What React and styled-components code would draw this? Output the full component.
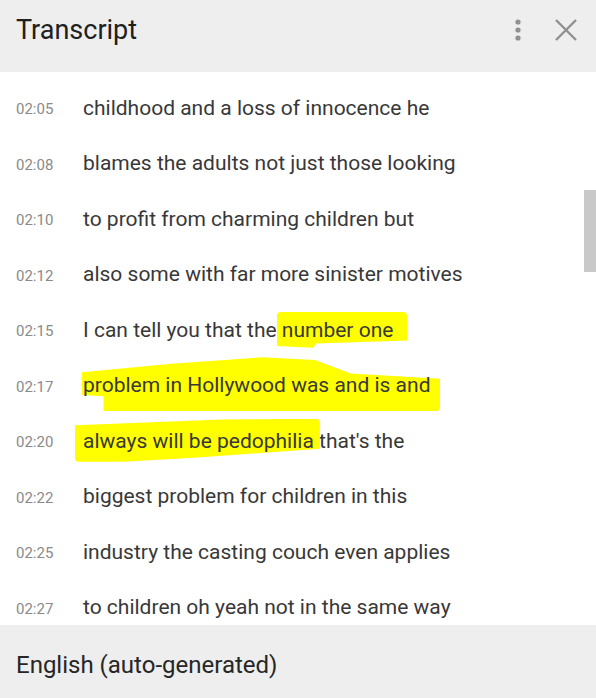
import React from "react";
import styled, { createGlobalStyle } from "styled-components";

const Global = createGlobalStyle`
  html, body { margin: 0; padding: 0; background: #fff; }
  body { font-family: Roboto, "Noto Sans", sans-serif; }
  * { box-sizing: border-box; }
`;

const Panel = styled.div`
  width: 596px;
  height: 698px;
  display: flex;
  flex-direction: column;
  background: #fff;
  overflow: hidden;
`;

const Header = styled.header`
  height: 72px;
  flex: none;
  background: #eeeeee;
  display: flex;
  align-items: center;
  padding: 0 0 12px 16px;
`;

const Title = styled.h1`
  margin: 0;
  flex: 1;
  font-size: 27px;
  font-weight: 400;
  color: #202020;
`;

const IconButton = styled.button`
  border: 0;
  background: none;
  padding: 0;
  width: ${(p) => p.$w}px;
  height: 40px;
  display: flex;
  align-items: center;
  justify-content: center;
  color: #909090;
`;

const List = styled.div`
  position: relative;
  flex: 1;
  overflow: hidden;
  padding-top: 8px;
`;

const Row = styled.div`
  height: 55.5px;
  display: flex;
  align-items: center;
  padding-left: 16px;
`;

const Time = styled.span`
  width: 67px;
  flex: none;
  font-size: 15px;
  color: #8a8a8a;
  padding-top: 3px;
`;

const Text = styled.span`
  font-size: 21px;
  color: #383838;
  white-space: nowrap;
`;

const Mark = styled.span`
  position: relative;
  z-index: 0;
  &::before {
    content: "";
    position: absolute;
    z-index: -1;
    top: ${(p) => p.$t}px;
    bottom: ${(p) => p.$b}px;
    left: ${(p) => p.$l}px;
    right: ${(p) => p.$r}px;
    background: #ffff00;
    border-radius: 4px;
    clip-path: ${(p) => p.$clip};
  }
`;

const Thumb = styled.div`
  position: absolute;
  right: 0;
  top: 118px;
  width: 12px;
  height: 82px;
  background: #c9c9c9;
`;

const Footer = styled.footer`
  height: 73px;
  flex: none;
  background: #eeeeee;
  display: flex;
  align-items: center;
  padding: 6px 0 0 16px;
  font-size: 24px;
  color: #262626;
`;

const rows = [
  ["02:05", "childhood and a loss of innocence he"],
  ["02:08", "blames the adults not just those looking"],
  ["02:10", "to profit from charming children but"],
  ["02:12", "also some with far more sinister motives"],
  ["02:15", <>I can tell you that the <Mark $t={-6} $b={-6} $l={-5} $r={-14} $clip="polygon(0 0, 100% 0, 100% 80%, 30% 88%, 28% 100%, 0 95%)">number one</Mark></>],
  ["02:17", <Mark $t={-16} $b={-14} $l={-1} $r={-10} $clip="polygon(0 28%, 25% 12%, 50% 0, 65% 5%, 75% 30%, 100% 40%, 100% 100%, 6% 100%, 6% 72%, 0 70%)">problem in Hollywood was and is and</Mark>],
  ["02:20", <><Mark $t={-10} $b={-9} $l={-8} $r={-6} $clip="polygon(0 15%, 60% 2%, 100% 0, 100% 70%, 50% 90%, 20% 100%, 0 100%)">always will be pedophilia</Mark> that's the</>],
  ["02:22", "biggest problem for children in this"],
  ["02:25", "industry the casting couch even applies"],
  ["02:27", "to children oh yeah not in the same way"],
];

export default function App() {
  return (
    <>
      <Global />
      <Panel>
        <Header>
          <Title>Transcript</Title>
          <IconButton $w={36} aria-label="More">
            <svg width="8" height="24" viewBox="0 0 8 24">
              <circle cx="4" cy="4" r="2.6" fill="currentColor" />
              <circle cx="4" cy="12" r="2.6" fill="currentColor" />
              <circle cx="4" cy="20" r="2.6" fill="currentColor" />
            </svg>
          </IconButton>
          <IconButton $w={60} aria-label="Close">
            <svg width="24" height="24" viewBox="0 0 24 24">
              <path d="M2 2 L22 22 M22 2 L2 22" stroke="currentColor" strokeWidth="2.4" fill="none" />
            </svg>
          </IconButton>
        </Header>
        <List>
          {rows.map(([t, txt]) => (
            <Row key={t}>
              <Time>{t}</Time>
              <Text>{txt}</Text>
            </Row>
          ))}
          <Thumb />
        </List>
        <Footer>English (auto-generated)</Footer>
      </Panel>
    </>
  );
}
